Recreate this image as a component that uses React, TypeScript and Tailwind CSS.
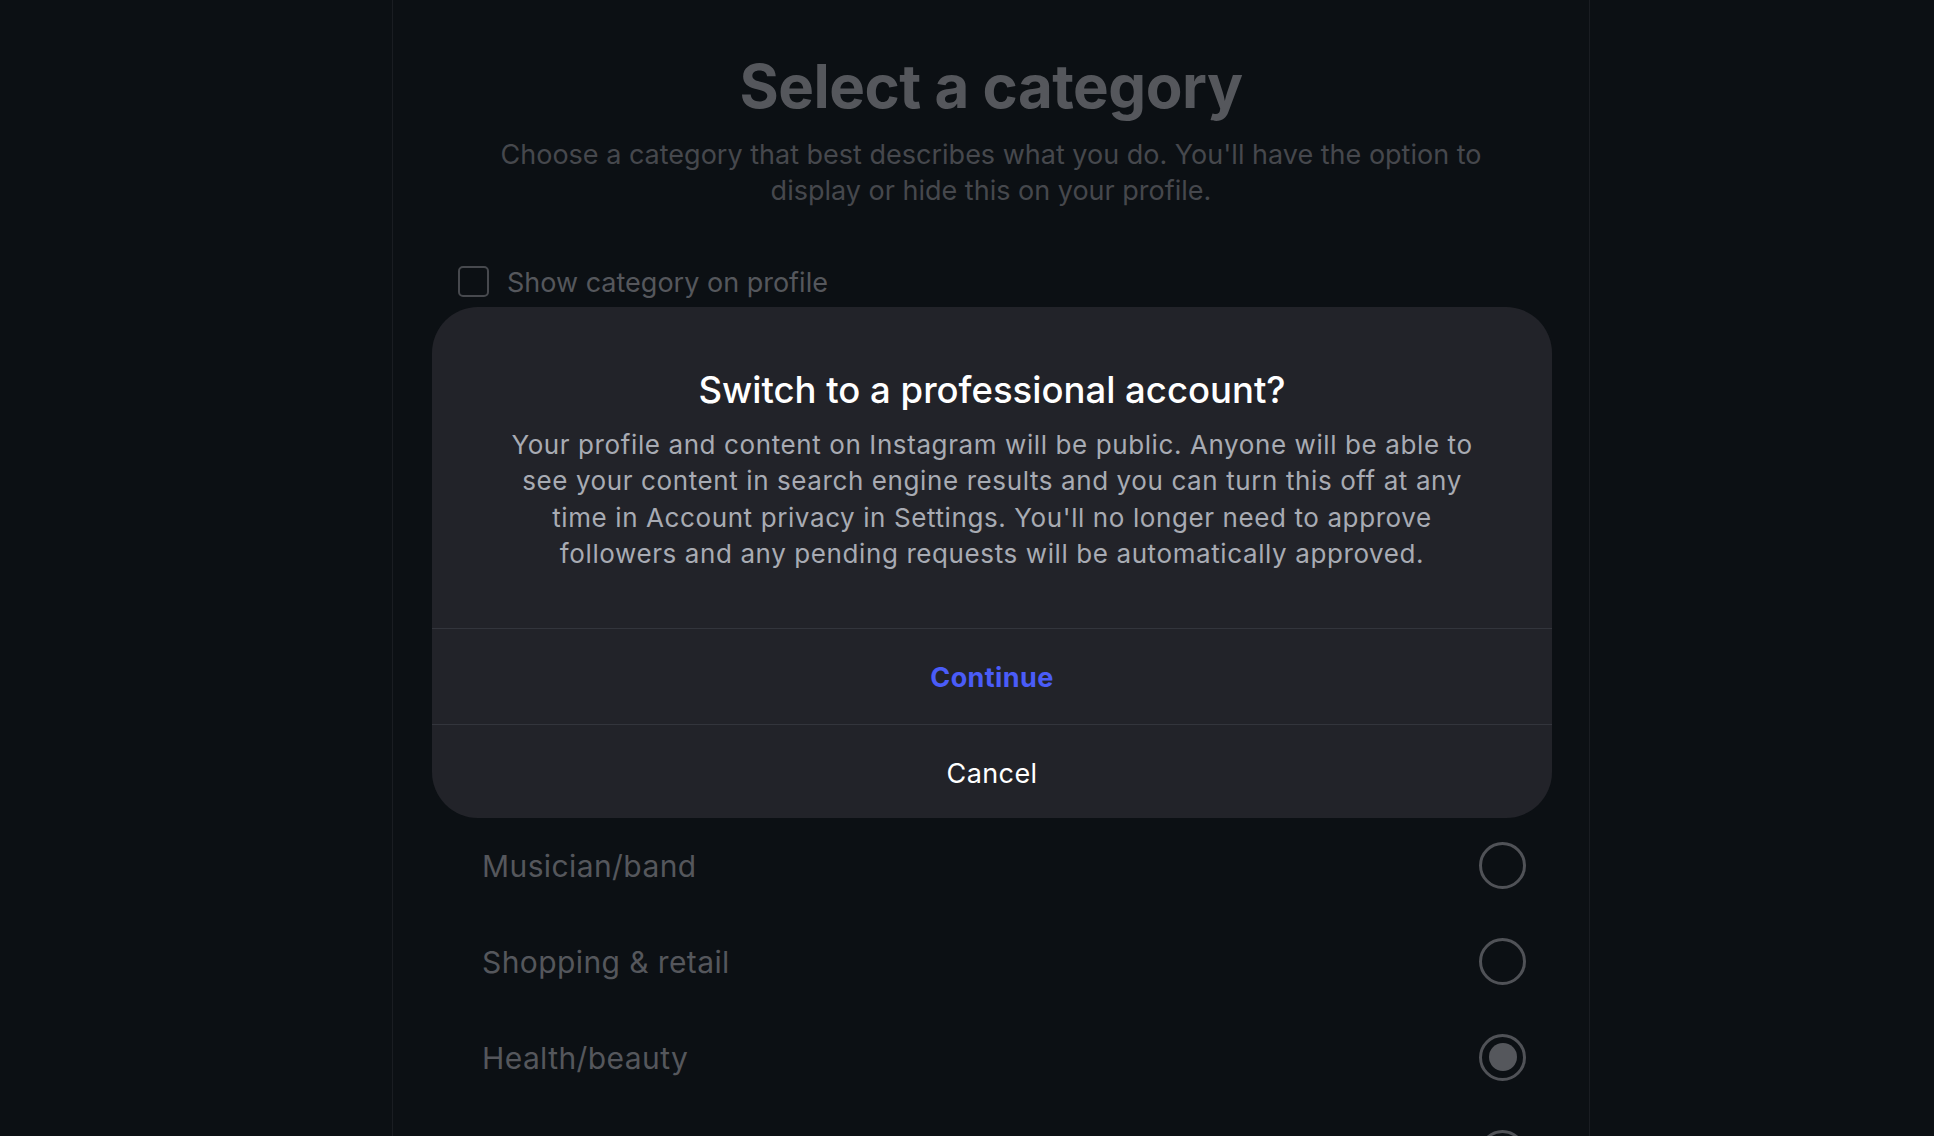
import React from "react";

const rows: { label: string; selected?: boolean; hidden?: boolean }[] = [
  { label: "Artist", hidden: true },
  { label: "Digital creator", hidden: true },
  { label: "Personal blog", hidden: true },
  { label: "Product/service", hidden: true },
  { label: "Gamer", hidden: true },
  { label: "Musician/band" },
  { label: "Shopping & retail" },
  { label: "Health/beauty", selected: true },
  { label: "Video creator", hidden: true },
];

export default function App() {
  return (
    <div
      className="h-screen w-full overflow-hidden bg-[#0c1014]"
      style={{ fontFamily: "Inter, 'Noto Sans', sans-serif" }}
    >
      <div className="relative ml-[392px] h-screen w-[1198px] overflow-hidden border-x border-[#1a1d22]">
        <div className="flex flex-col pt-[50px]">
          <h1 className="text-center text-[60px] font-bold leading-[72px] tracking-[-0.5px] text-[#55575c]">
            Select a category
          </h1>
          <p className="mx-auto mt-[15px] w-[1010px] text-center text-[27px] leading-[36px] text-[#46484d]">
            Choose a category that best describes what you do. You'll have the option to display or hide this on your profile.
          </p>
          <div className="mt-[56px] flex h-[32px] items-center gap-[18px] pl-[65px]">
            <div className="h-[31px] w-[31px] rounded-[5px] border-2 border-[#47494e]" />
            <span className="pt-[3px] text-[27px] leading-[32px] text-[#55575c]">Show category on profile</span>
          </div>
          <div className="mt-[40px] flex flex-col pl-[89px] pr-[63px]">
            {rows.map((r) => (
              <div key={r.label} className="flex h-[96px] items-center justify-between">
                <span
                  className={
                    r.hidden
                      ? "invisible pt-[3px] text-[30px] tracking-[0.4px] text-[#55575c]"
                      : "pt-[3px] text-[30px] tracking-[0.4px] text-[#55575c]"
                  }
                >
                  {r.label}
                </span>
                <div className="flex h-[47px] w-[47px] items-center justify-center rounded-full border-[3px] border-[#505257]">
                  {r.selected && <div className="h-[28px] w-[28px] rounded-full bg-[#55575c]" />}
                </div>
              </div>
            ))}
          </div>
        </div>

        <div className="absolute left-[39px] top-[307px] h-[511px] w-[1120px] overflow-hidden rounded-[46px] bg-[#222329]">
          <div className="h-[321px] px-[68px] pt-[61px] text-center">
            <h2 className="text-[36.5px] font-medium leading-[44px] text-white">
              Switch to a professional account?
            </h2>
            <p className="mt-[15px] text-[26px] leading-[36.3px] tracking-[0.6px] text-[#a8abb3]">
              Your profile and content on Instagram will be public. Anyone will be able to see your content in search engine results and you can turn this off at any time in Account privacy in Settings. You'll no longer need to approve followers and any pending requests will be automatically approved.
            </p>
          </div>
          <button className="flex h-[96px] w-full items-center justify-center border-t border-[#33353c] pt-[3px] text-[27px] font-bold tracking-[0.4px] text-[#4a5cf8]">
            Continue
          </button>
          <button className="flex h-[96px] w-full items-center justify-center border-t border-[#33353c] pt-[3px] text-[27px] tracking-[0.4px] text-white">
            Cancel
          </button>
        </div>
      </div>
    </div>
  );
}
